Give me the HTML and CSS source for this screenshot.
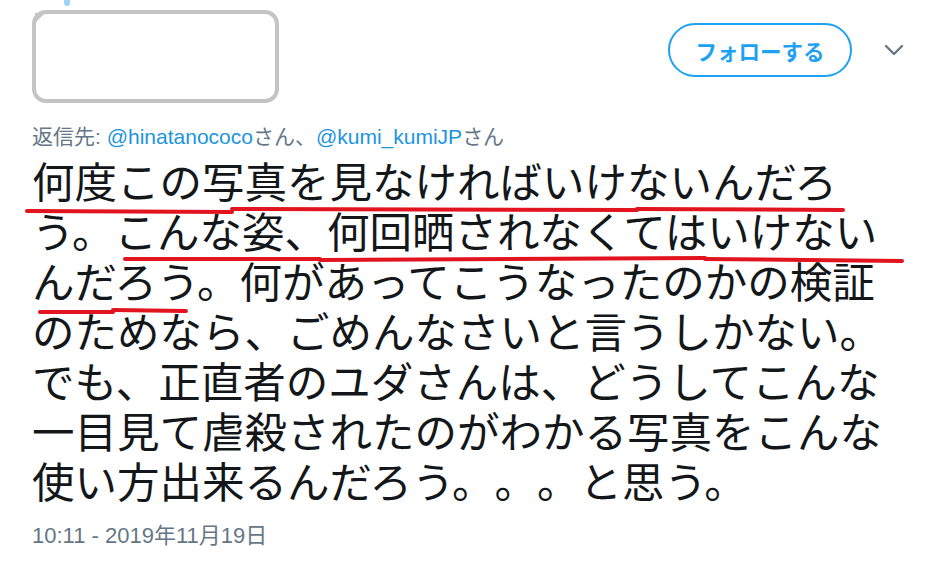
FILE: index.html
```html
<!DOCTYPE html>
<html lang="ja">
<head>
    <meta charset="UTF-8">
    <meta name="viewport" content="width=device-width, initial-scale=1.0">
    <title>ツイート</title>
    <link rel="stylesheet" href="styles.css">
</head>
<body>
    <div class="tweet">
        <span class="pin"></span>

        <!-- Header: hidden user box + follow -->
        <div class="header">
            <div class="user-box">
                <span class="corner"></span>
            </div>
            <div class="actions">
                <button class="follow-btn">フォローする</button>
                <svg class="chevron" width="20" height="14" viewBox="0 0 20 14">
                    <path d="M2 3 L10 11 L18 3" fill="none" stroke="#657786" stroke-width="2.4" stroke-linecap="round" stroke-linejoin="round"/>
                </svg>
            </div>
        </div>

        <div class="reply-to">
            返信先: <a class="mention">@hinatanococo</a>さん、<a class="mention">@kumi_kumiJP</a>さん
        </div>

        <p class="tweet-text">何度この写真を見なければいけないんだろう。こんな姿、何回晒されなくてはいけないんだろう。何があってこうなったのかの検証のためなら、ごめんなさいと言うしかない。でも、正直者のユダさんは、どうしてこんな一目見て虐殺されたのがわかる写真をこんな使い方出来るんだろう。。。と思う。</p>

        <div class="timestamp">10:11 - 2019年11月19日</div>

        <!-- Red hand-drawn underlines over the text -->
        <svg class="marks" width="926" height="578" viewBox="0 0 926 578">
            <g fill="none" stroke="#e2141f" stroke-width="4" stroke-linecap="round">
                <path d="M27 211 L232 212"/>
                <path d="M232 209 L637 210"/>
                <path d="M637 209 L843 210"/>
                <path d="M125 259 L320 259"/>
                <path d="M320 260 L705 258"/>
                <path d="M705 259 L902 261"/>
                <path d="M40 312 L113 312"/>
                <path d="M113 310 L186 311"/>
            </g>
        </svg>
    </div>
</body>
</html>
```

FILE: styles.css
```css
body {
    margin: 0;
    background: #fff;
    font-family: "Liberation Sans", Arial, "Noto Sans CJK JP", sans-serif;
}

.tweet {
    position: relative;
    width: 926px;
    height: 578px;
    padding: 10px 0 0 32px;
    box-sizing: border-box;
    overflow: hidden;
}

.pin {
    position: absolute;
    top: -4px;
    left: 64px;
    width: 6px;
    height: 10px;
    border-radius: 3px;
    background: #9fd3f7;
}

.header {
    display: flex;
    justify-content: space-between;
    align-items: flex-start;
    padding-right: 22px;
}

.user-box {
    position: relative;
    width: 247px;
    height: 93px;
    border: 4px solid #c4c4c4;
    border-radius: 14px;
    box-sizing: border-box;
}

.corner {
    position: absolute;
    top: -1px;
    left: -1px;
    width: 0;
    height: 0;
    border-top: 10px solid #c4c4c4;
    border-right: 10px solid transparent;
}

.actions {
    display: flex;
    align-items: center;
    gap: 32px;
    margin-top: 13px;
}

.follow-btn {
    width: 184px;
    height: 54px;
    border: 2px solid #1da1f2;
    border-radius: 27px;
    background: #fff;
    color: #1da1f2;
    font-family: "Noto Sans CJK JP", sans-serif;
    font-size: 21.5px;
    font-weight: bold;
    padding: 0;
    cursor: pointer;
}

.chevron {
    display: block;
}

.reply-to {
    margin-top: 22px;
    font-size: 21px;
    line-height: 24px;
    color: #657786;
}

.mention {
    color: #1b95e0;
    text-decoration: none;
}

.tweet-text {
    width: 862px;
    margin: 6px 0 0;
    font-family: "Noto Sans CJK JP", sans-serif;
    font-size: 42.5px;
    line-height: 50px;
    color: #14171a;
    line-break: strict;
    text-spacing-trim: space-all;
    font-feature-settings: "halt" 0, "chws" 0;
}

.timestamp {
    margin-top: 18px;
    font-size: 22px;
    line-height: 26px;
    color: #657786;
}

.marks {
    position: absolute;
    top: 0;
    left: 0;
    pointer-events: none;
}
```
